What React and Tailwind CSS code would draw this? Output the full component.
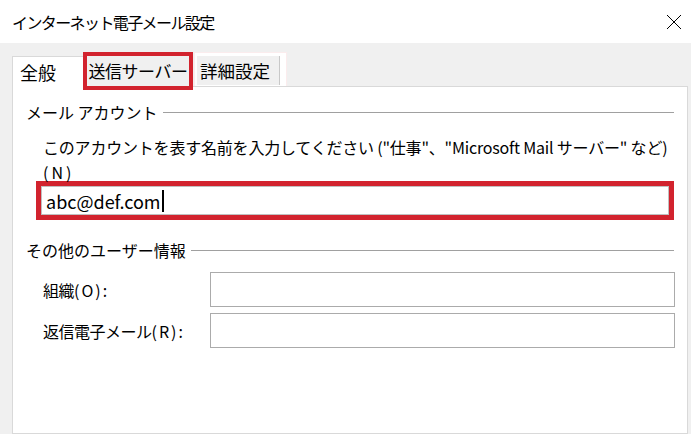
import React from 'react'

const jp = { fontFamily: '"Noto Sans CJK JP", "Noto Sans", sans-serif' }

function GroupTitle({ children }) {
  return (
    <div className="flex items-center h-[20px]">
      <span className="text-[16px] leading-[20px] whitespace-nowrap mr-[5px]">{children}</span>
      <div className="flex-1 h-px bg-[#a0a0a0]" />
    </div>
  )
}

function Field({ label, hint }) {
  return (
    <div className="flex items-center">
      <div className="w-[184px] pl-[17px] text-[16px] whitespace-nowrap">
        <span className="tracking-[-0.5px]">{label}</span>
        <span className="tracking-[2px]">{hint}</span>
      </div>
      <div className="flex-1 h-[35px] border border-[#ababab] bg-white mr-[-1px]" />
    </div>
  )
}

export default function App() {
  return (
    <div className="w-[691px] h-[434px] overflow-hidden bg-[#f0f0f0] text-black flex flex-col" style={jp}>
      {/* title bar */}
      <div className="h-[43px] bg-white flex items-center justify-between pl-[12px] pr-[9px]">
        <span className="text-[16px] tracking-[-1.6px] leading-none">インターネット電子メール設定</span>
        <svg width="16" height="16" viewBox="0 0 16 16" className="text-black">
          <path d="M1 1 L15 15 M15 1 L1 15" stroke="currentColor" strokeWidth="1" />
        </svg>
      </div>

      <div className="flex-1 flex flex-col pl-[12px] pr-[3px]">
        {/* tabs */}
        <div className="h-[43px] flex items-end">
          <div className="relative z-10 w-[71px] h-[31px] mb-[-1px] bg-white border-l border-t border-[#d9d9d9] pl-[7px] text-[18px] leading-[30px]">
            全般
          </div>
          <div className="relative z-20 w-[110px] h-[38px] mb-[-4px] border-[4px] border-[#d2232e] bg-[#f0f0f0] flex items-center justify-center text-[17px] tracking-[-0.5px]">
            送信サーバー
          </div>
          <div className="ml-[1px] mb-[-3px] h-[37px] pt-[3px] pl-[2px] pr-[6px] border border-[#fbeced] bg-white flex items-start">
            <div className="w-[83px] h-[29px] bg-[#f0f0f0] border-r border-[#c8c8c8] pl-[3px] text-[17.5px] leading-[29px]">
              詳細設定
            </div>
          </div>
        </div>

        {/* panel */}
        <div className="flex-1 bg-white border border-[#d9d9d9] pt-[15px] px-[13px]">
          <GroupTitle>メール アカウント</GroupTitle>
          <div className="mt-[13px] pl-[17px] text-[16px] leading-[25px] whitespace-nowrap tracking-[-0.2px]">
            このアカウントを表す名前を入力してください ("仕事"、"Microsoft Mail サーバー" など)
            <br />
            <span className="tracking-[3px]">(N)</span>
          </div>
          <div className="ml-[10px] mt-[-4px] h-[39px] border-[5px] border-[#d2232e] bg-white">
            <div className="h-full border border-[#c0c0c0] flex items-center pl-[4px]">
              <span className="text-[18px] leading-none">abc@def.com</span>
              <span className="w-[2px] h-[22px] bg-black ml-[1px]" />
            </div>
          </div>

          <div className="mt-[20px]">
            <GroupTitle>その他のユーザー情報</GroupTitle>
          </div>
          <div className="mt-[12px] flex flex-col gap-[6px]">
            <Field label="組織" hint="(O):" />
            <Field label="返信電子メール" hint="(R):" />
          </div>
        </div>
      </div>
    </div>
  )
}
